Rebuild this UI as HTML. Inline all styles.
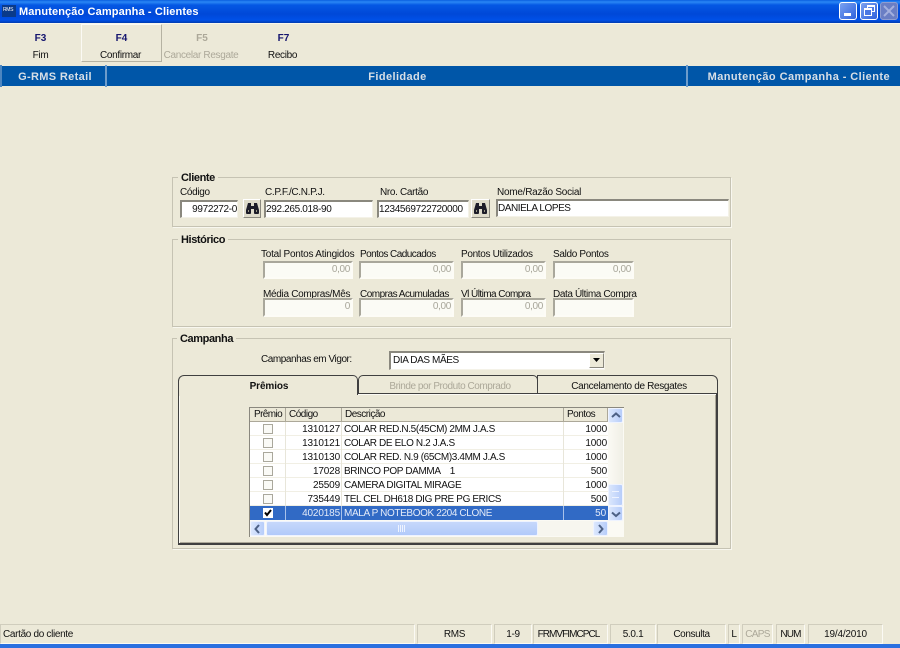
<!DOCTYPE html>
<html><head><meta charset="utf-8"><style>
html,body{margin:0;padding:0}
#p{position:relative;width:900px;height:648px;overflow:hidden;background:#ece9d8;font:10px/13px "Liberation Sans",sans-serif;color:#111;letter-spacing:-.33px}
#p div,#p svg{position:absolute;box-sizing:border-box}
.t{white-space:nowrap}
.b{font-weight:bold}
.g{border:1px solid #c6c3b3;box-shadow:1px 1px 0 #f8f7ef}
.lg{background:#ece9d8;padding:0 3px;font:bold 11px/13px "Liberation Sans",sans-serif;color:#111;white-space:nowrap;letter-spacing:-.4px}
.i{background:#fff;border-top:2px solid #8a887e;border-left:2px solid #8a887e;border-right:1px solid #f4f2e8;border-bottom:1px solid #f4f2e8;white-space:nowrap;line-height:13px;padding:1px 0}
.d{background:#fbfbf5;color:#a8a69a;text-align:right;padding:0 1px 0 0;border-top:2px solid #a9a79b;border-left:2px solid #a9a79b;border-right:2px solid #fdfcf6;border-bottom:2px solid #fdfcf6}
.bn{background:#dedbca;border:1px solid;border-color:#fff #8a887e #8a887e #fff}
.s{top:624px;height:20px;border:1px solid;border-color:#d0cdbd #fbfaf4 #fbfaf4 #d0cdbd;text-align:center;line-height:19px;white-space:nowrap}
.r{left:250px;width:358px;height:14px;background:#fff;line-height:15px;box-shadow:inset 0 -1px 0 #f1efe4;letter-spacing:-.37px}
.c{top:0;height:14px;white-space:nowrap;border-right:1px solid #e8e6da}
.n{letter-spacing:-.15px}
.ck{left:13px;top:2px;width:10px;height:10px;border:1px solid #aaa89c;background:#fafaf6}
.h{top:0;height:13px;border-right:1px solid #aca899;padding-left:3px;white-space:nowrap;background:#ece9d8;line-height:14px;letter-spacing:-.5px}
.sb{background:linear-gradient(90deg,#dbe7fd,#b7cdfa);border:1px solid #eef3ff;border-radius:2px}
.tb{color:#14146e;letter-spacing:0}
.ti{font-size:11px;color:#d8dfe6;letter-spacing:.4px}
</style></head><body><div id="p">

<div style="left:0;top:0;width:900px;height:23px;background:linear-gradient(180deg,#0a5fe0 0,#2a87f5 2px,#0558e4 5px,#0048d8 14px,#0050e8 20px,#003bb0 23px)"></div>
<div style="left:2px;top:5px;width:14px;height:12px;background:#0a3a8a"></div>
<div class="t" style="left:3px;top:6px;font:5px/8px 'Liberation Sans',sans-serif;color:#fff">RMS</div>
<div class="t b" style="left:19px;top:6px;font-size:11px;color:#fff;letter-spacing:.12px">Manutenção Campanha - Clientes</div>
<div style="left:839px;top:2px;width:18px;height:18px;border:1px solid #fff;border-radius:3px;background:linear-gradient(135deg,#7ba2f0,#2f62dd)"><div style="left:4px;top:10px;width:7px;height:3px;background:#fff"></div></div>
<div style="left:860px;top:2px;width:18px;height:18px;border:1px solid #fff;border-radius:3px;background:linear-gradient(135deg,#7ba2f0,#2f62dd)"><div style="left:6px;top:2px;width:8px;height:7px;border:1px solid #fff;border-top-width:2px"></div><div style="left:3px;top:5px;width:8px;height:8px;border:1px solid #fff;border-top-width:2px;background:#4a78e4"></div></div>
<div style="left:880px;top:2px;width:18px;height:18px;border:1px solid #8f9dd0;border-radius:3px;background:#6a7ec4"><svg style="left:2px;top:2px" width="12" height="12" viewBox="0 0 12 12"><path d="M1 1L11 11M11 1L1 11" stroke="#a4b0de" stroke-width="2"/></svg></div>
<div style="left:0;top:23px;width:900px;height:1px;background:#f8f6ec"></div>

<div style="left:81px;top:24px;width:81px;height:38px;border:1px solid;border-color:#fbfaf4 #b5b2a2 #b5b2a2 #fbfaf4"></div>
<div class="t b tb" style="left:0;top:32px;width:81px;text-align:center">F3</div>
<div class="t" style="left:0;top:49px;width:81px;text-align:center">Fim</div>
<div class="t b tb" style="left:81px;top:32px;width:81px;text-align:center">F4</div>
<div class="t" style="left:80px;top:49px;width:81px;text-align:center">Confirmar</div>
<div class="t b tb" style="left:162px;top:32px;width:80px;text-align:center;color:#aca899">F5</div>
<div class="t" style="left:161px;top:49px;width:80px;text-align:center;color:#aca899">Cancelar Resgate</div>
<div class="t b tb" style="left:243px;top:32px;width:81px;text-align:center">F7</div>
<div class="t" style="left:242px;top:49px;width:81px;text-align:center">Recibo</div>

<div style="left:0;top:66px;width:900px;height:20px;background:#0056a8"></div>
<div style="left:0;top:65px;width:2px;height:22px;background:#4d86c0"></div>
<div style="left:105px;top:65px;width:2px;height:22px;background:#6d9ccb"></div>
<div style="left:686px;top:65px;width:2px;height:22px;background:#6d9ccb"></div>
<div class="t b ti" style="left:3px;top:71px;width:104px;text-align:center;letter-spacing:.35px">G-RMS Retail</div>
<div class="t b ti" style="left:108px;top:71px;width:579px;text-align:center">Fidelidade</div>
<div class="t b ti" style="left:688px;top:71px;width:202px;text-align:right;letter-spacing:.43px">Manutenção Campanha - Cliente</div>

<div class="g" style="left:172px;top:177px;width:559px;height:50px"></div>
<div class="lg" style="left:178px;top:172px">Cliente</div>
<div class="t" style="left:180px;top:186px">Código</div>
<div class="t" style="left:265px;top:186px">C.P.F./C.N.P.J.</div>
<div class="t" style="left:380px;top:186px">Nro. Cartão</div>
<div class="t" style="left:497px;top:186px;letter-spacing:-.25px">Nome/Razão Social</div>
<div class="i" style="left:180px;top:200px;width:58px;height:18px;text-align:right">9972272-0</div>
<div class="bn" style="left:243px;top:199px;width:18px;height:19px"><svg style="left:1px;top:3px" width="15" height="12" viewBox="0 0 15 12"><path d="M3 0h3v3h3V0h3l2 7v3q0 1-1 1h-3q-1 0-1-1V6H6v4q0 1-1 1H2q-1 0-1-1V7z" fill="#1c1c28"/><path d="M3 7h1v2H3zM11 7h1v2h-1z" fill="#9a9888"/></svg></div>
<div class="i" style="left:264px;top:200px;width:109px;height:18px">292.265.018-90</div>
<div class="i" style="left:377px;top:200px;width:92px;height:18px">1234569722720000</div>
<div class="bn" style="left:471px;top:199px;width:19px;height:19px"><svg style="left:1px;top:3px" width="15" height="12" viewBox="0 0 15 12"><path d="M3 0h3v3h3V0h3l2 7v3q0 1-1 1h-3q-1 0-1-1V6H6v4q0 1-1 1H2q-1 0-1-1V7z" fill="#1c1c28"/><path d="M3 7h1v2H3zM11 7h1v2h-1z" fill="#9a9888"/></svg></div>
<div class="i" style="left:496px;top:199px;width:233px;height:18px;letter-spacing:-.45px">DANIELA LOPES</div>

<div class="g" style="left:172px;top:239px;width:559px;height:88px"></div>
<div class="lg" style="left:178px;top:234px">Histórico</div>
<div class="t" style="left:261px;top:248px;letter-spacing:-.23px">Total Pontos Atingidos</div>
<div class="t" style="left:360px;top:248px;letter-spacing:-.55px">Pontos Caducados</div>
<div class="t" style="left:461px;top:248px">Pontos Utilizados</div>
<div class="t" style="left:553px;top:248px">Saldo Pontos</div>
<div class="i d" style="left:263px;top:261px;width:90px;height:18px">0,00</div>
<div class="i d" style="left:359px;top:261px;width:95px;height:18px">0,00</div>
<div class="i d" style="left:461px;top:261px;width:85px;height:18px">0,00</div>
<div class="i d" style="left:553px;top:261px;width:81px;height:18px">0,00</div>
<div class="t" style="left:263px;top:288px;letter-spacing:-.3px">Média Compras/Mês</div>
<div class="t" style="left:360px;top:288px;letter-spacing:-.5px">Compras Acumuladas</div>
<div class="t" style="left:461px;top:288px;letter-spacing:-.55px">Vl Última Compra</div>
<div class="t" style="left:553px;top:288px;letter-spacing:-.39px">Data Última Compra</div>
<div class="i d" style="left:263px;top:298px;width:90px;height:19px">0</div>
<div class="i d" style="left:359px;top:298px;width:95px;height:19px">0,00</div>
<div class="i d" style="left:461px;top:298px;width:85px;height:19px">0,00</div>
<div class="i d" style="left:553px;top:298px;width:81px;height:19px"></div>

<div class="g" style="left:172px;top:338px;width:559px;height:211px"></div>
<div class="lg" style="left:177px;top:333px">Campanha</div>
<div class="t" style="left:261px;top:353px;letter-spacing:-.45px">Campanhas em Vigor:</div>
<div class="i" style="left:389px;top:351px;width:216px;height:19px;letter-spacing:-.4px;padding:1px 2px 0">DIA DAS MÃES</div>
<div class="bn" style="left:589px;top:353px;width:15px;height:15px;background:#ece9d8"><svg style="left:3px;top:4px" width="8" height="5"><path d="M0 0h7L3.500 4z" fill="#000"/></svg></div>

<div style="left:178px;top:393px;width:540px;height:152px;border:1px solid #404040;border-right-width:2px;border-bottom-width:2px;box-shadow:inset 1px 1px 0 #fbfaf4,inset -1px -1px 0 #aca899"></div>
<div style="left:358px;top:375px;width:180px;height:19px;border:1px solid #404040;border-radius:5px 5px 0 0"></div>
<div style="left:537px;top:375px;width:181px;height:19px;border:1px solid #404040;border-radius:0 6px 0 0"></div>
<div style="left:178px;top:375px;width:180px;height:20px;background:#ece9d8;border:1px solid #404040;border-bottom:0;border-radius:6px 5px 0 0"></div>
<div style="left:179px;top:393px;width:178px;height:3px;background:#ece9d8"></div>
<div class="t b" style="left:179px;top:380px;width:180px;text-align:center;letter-spacing:-.1px">Prêmios</div>
<div class="t" style="left:360px;top:380px;width:180px;text-align:center;color:#aca899;letter-spacing:-.45px">Brinde por Produto Comprado</div>
<div class="t" style="left:539px;top:380px;width:180px;text-align:center">Cancelamento de Resgates</div>

<div style="left:249px;top:407px;width:375px;height:130px;background:#fbfaf4;border-top:1px solid #8a887e;border-left:1px solid #8a887e"></div>
<div class="h" style="left:250px;top:408px;width:36px;padding-left:4px;letter-spacing:-.6px">Prêmio</div>
<div class="h" style="left:286px;top:408px;width:56px">Código</div>
<div class="h" style="left:342px;top:408px;width:222px">Descrição</div>
<div class="h" style="left:564px;top:408px;width:44px">Pontos</div>
<div style="left:250px;top:421px;width:358px;height:1px;background:#aca899"></div>

<div class="r" style="top:422px"><div class="c" style="left:0;width:36px"><div class="ck"></div></div><div class="c n" style="left:36px;width:56px;text-align:right;padding-right:1px">1310127</div><div class="c" style="left:92px;width:222px;padding-left:2px">COLAR RED.N.5(45CM) 2MM J.A.S</div><div class="c n" style="left:314px;width:43px;text-align:right;border:0">1000</div></div>
<div class="r" style="top:436px"><div class="c" style="left:0;width:36px"><div class="ck"></div></div><div class="c n" style="left:36px;width:56px;text-align:right;padding-right:1px">1310121</div><div class="c" style="left:92px;width:222px;padding-left:2px">COLAR DE ELO N.2 J.A.S</div><div class="c n" style="left:314px;width:43px;text-align:right;border:0">1000</div></div>
<div class="r" style="top:450px"><div class="c" style="left:0;width:36px"><div class="ck"></div></div><div class="c n" style="left:36px;width:56px;text-align:right;padding-right:1px">1310130</div><div class="c" style="left:92px;width:222px;padding-left:2px">COLAR RED. N.9 (65CM)3.4MM J.A.S</div><div class="c n" style="left:314px;width:43px;text-align:right;border:0">1000</div></div>
<div class="r" style="top:464px"><div class="c" style="left:0;width:36px"><div class="ck"></div></div><div class="c n" style="left:36px;width:56px;text-align:right;padding-right:1px">17028</div><div class="c" style="left:92px;width:222px;padding-left:2px">BRINCO POP DAMMA &nbsp; &nbsp;1</div><div class="c n" style="left:314px;width:43px;text-align:right;border:0">500</div></div>
<div class="r" style="top:478px"><div class="c" style="left:0;width:36px"><div class="ck"></div></div><div class="c n" style="left:36px;width:56px;text-align:right;padding-right:1px">25509</div><div class="c" style="left:92px;width:222px;padding-left:2px">CAMERA DIGITAL MIRAGE</div><div class="c n" style="left:314px;width:43px;text-align:right;border:0">1000</div></div>
<div class="r" style="top:492px"><div class="c" style="left:0;width:36px"><div class="ck"></div></div><div class="c n" style="left:36px;width:56px;text-align:right;padding-right:1px">735449</div><div class="c" style="left:92px;width:222px;padding-left:2px">TEL CEL DH618 DIG PRE PG ERICS</div><div class="c n" style="left:314px;width:43px;text-align:right;border:0">500</div></div>
<div class="r" style="top:506px;background:#316ac5;color:#e4ebf8;box-shadow:none"><div class="c" style="left:0;width:36px;border-color:#a9c2ea"><div class="ck" style="background:#fff;border-color:#fff"><svg style="left:0;top:0" width="8" height="8" viewBox="0 0 8 8"><path d="M1 3.500L3 6L7 1" fill="none" stroke="#000" stroke-width="2"/></svg></div></div><div class="c n" style="left:36px;width:56px;text-align:right;padding-right:1px;border-color:#a9c2ea">4020185</div><div class="c" style="left:92px;width:222px;padding-left:2px;border-color:#a9c2ea">MALA P NOTEBOOK 2204 CLONE</div><div class="c n" style="left:314px;width:42px;text-align:right;border:0">50</div></div>

<div class="sb" style="left:608px;top:408px;width:15px;height:15px"><svg style="left:2px;top:3px" width="10" height="7"><path d="M1 5L5 1.500L9 5" fill="none" stroke="#4d6185" stroke-width="2"/></svg></div>
<div style="left:608px;top:423px;width:15px;height:83px;background:linear-gradient(90deg,#fbfaf4,#f0efe6)"></div>
<div class="sb" style="left:608px;top:484px;width:15px;height:22px"><div style="left:3px;top:6px;width:7px;height:7px;border-top:1px solid #eef3ff;border-bottom:1px solid #eef3ff"></div></div>
<div class="sb" style="left:608px;top:506px;width:15px;height:15px"><svg style="left:2px;top:4px" width="10" height="7"><path d="M1 1.500L5 5L9 1.500" fill="none" stroke="#4d6185" stroke-width="2"/></svg></div>
<div class="sb" style="left:250px;top:521px;width:15px;height:15px"><svg style="left:3px;top:2px" width="7" height="10"><path d="M5 1L1.500 5L5 9" fill="none" stroke="#4d6185" stroke-width="2"/></svg></div>
<div class="sb" style="left:266px;top:521px;width:272px;height:15px;background:linear-gradient(180deg,#c6d8fb,#b2cafa)"><div style="left:131px;top:3px;width:8px;height:7px;background:repeating-linear-gradient(90deg,#eef3ff 0 1px,transparent 1px 2px)"></div></div>
<div style="left:538px;top:521px;width:55px;height:15px;background:#f7f6ef"></div>
<div class="sb" style="left:593px;top:521px;width:15px;height:15px"><svg style="left:3px;top:2px" width="7" height="10"><path d="M2 1L5.500 5L2 9" fill="none" stroke="#4d6185" stroke-width="2"/></svg></div>

<div class="s" style="left:0;width:415px;text-align:left;padding-left:2px">Cartão do cliente</div>
<div class="s" style="left:417px;width:75px">RMS</div>
<div class="s" style="left:494px;width:38px">1-9</div>
<div class="s" style="left:533px;width:75px;letter-spacing:-.95px;padding-right:4px">FRMVFIMCPCL</div>
<div class="s" style="left:610px;width:46px">5.0.1</div>
<div class="s" style="left:657px;width:69px;letter-spacing:-.4px">Consulta</div>
<div class="s" style="left:728px;width:12px">L</div>
<div class="s" style="left:742px;width:31px;color:#aca899;letter-spacing:-.7px">CAPS</div>
<div class="s" style="left:776px;width:29px;letter-spacing:-.8px">NUM</div>
<div class="s" style="left:808px;width:75px;letter-spacing:-.2px">19/4/2010</div>
<div style="left:0;top:644px;width:900px;height:4px;background:#2a70e0"></div>
</div></body></html>
